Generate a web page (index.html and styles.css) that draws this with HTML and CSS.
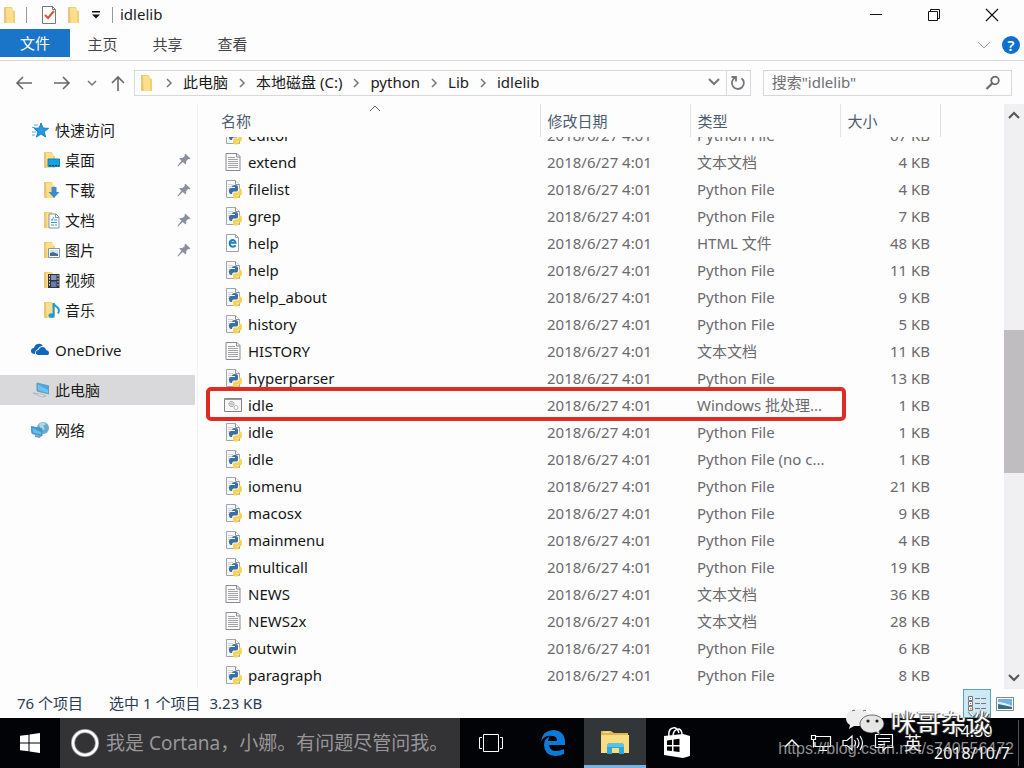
FILE: index.html
```html
<!DOCTYPE html>
<html lang="zh-CN">
<head>
<meta charset="utf-8">
<title>idlelib</title>
<link rel="stylesheet" href="styles.css">
</head>
<body>
<svg class="defs" aria-hidden="true">
  <symbol id="folder" viewBox="0 0 16 18"><path d="M2 1h8v3l3 1v12H2z" fill="#f3cf70"/><path d="M4 2h7v15H5z" fill="#fbdf8d"/><path d="M2 1l2 1v15l-2-1z" fill="#e9c67a"/></symbol>
  <symbol id="txt" viewBox="0 0 18 20"><path d="M2 1.500h11l3 3V18.500H2z" fill="#fbfbfb" stroke="#8b898c"/><path d="M12.500 1.500v3.500H16" fill="none" stroke="#8b898c"/><path d="M4 5.500h7M4 7.500h10M4 9.500h10M4 11.500h10M4 13.500h10M4 15.500h10" stroke="#a3a1a4"/></symbol>
  <symbol id="py" viewBox="0 0 18 20"><path d="M2.500 1.500h9l4 4V18.500h-13z" fill="#f6f7fa" stroke="#a2a5ab"/><path d="M11.500 1.500v4h4" fill="#fff" stroke="#8d9199"/><path d="M4 5.500h5M4 7.500h4M4 9.500h2M4 11.500h2" stroke="#ccd2dc"/><path d="M8 8q0-2 3-2t3 2v3q0 1.500-2 1.500H9.500Q8 12.500 8 15H7q-2 0-2-3t2-3h4V8z" fill="#3870a3"/><path d="M15 9.500h1q2 0 2 3.500t-2 3.500h-3.500v.5h2.500q0 2.500-3 2.500t-3-2v-2.500q0-1.500 1.500-1.500h2.500q2 0 2-2z" fill="#f8d353"/></symbol>
  <symbol id="html" viewBox="0 0 18 20"><path d="M2.500 1.500h9l3 3v14h-12z" fill="#fcfdff" stroke="#9ba3ad"/><path d="M11.500 1.500v3h3" fill="none" stroke="#9ba3ad"/><path d="M11.800 12.600Q8 15 6 12.200 5 8.500 7.500 7.200 10.500 6 11.500 9.700H6" fill="none" stroke="#1b80c8" stroke-width="2"/></symbol>
  <symbol id="bat" viewBox="0 0 18 20"><path d="M.5 3.500h17v13H.5z" fill="#f8f8f8" stroke="#858585"/><path d="M.5 4.500h17" stroke="#999"/><circle cx="7.500" cy="9" r="2.500" fill="none" stroke="#777" stroke-dasharray="1.300 .6"/><circle cx="7.500" cy="9" r="1" fill="none" stroke="#888" stroke-width=".6"/><circle cx="12" cy="12.500" r="2" fill="none" stroke="#888" stroke-dasharray="1 .6"/></symbol>
  <symbol id="pin" viewBox="0 0 14 14"><path d="M8.500.8l5 4.600-1.200.8-1.200-.2-2 2.300q.6 2-.5 3.300L5.800 9 1 13.500.3 13 4.500 7.800 2 5.600q1.500-1 3.400-.5l2.400-2-.3-1.300z" fill="#8a919b"/></symbol>
  <symbol id="chev" viewBox="0 0 8 10"><path d="M2 1l4 4-4 4" fill="none" stroke="#77757a" stroke-width="1.500"/></symbol>
  <symbol id="down" viewBox="0 0 14 10"><path d="M2 2l5 5 5-5" fill="none" stroke="currentColor" stroke-width="2"/></symbol>
  <symbol id="up" viewBox="0 0 14 10"><path d="M2 8l5-5 5 5" fill="none" stroke="currentColor" stroke-width="2"/></symbol>
</svg>
<div class="desktop">
  <header class="titlebar">
    <svg class="ico" viewBox="0 0 16 18"><use href="#folder"/></svg>
    <i class="rule"></i>
    <button class="quick check" aria-label="属性"><svg width="16" height="18" viewBox="0 0 16 18"><path d="M1.500.5h10l3 3v14h-13z" fill="#fff" stroke="#777"/><path d="M11.500.5v3h3" fill="none" stroke="#777"/><path d="M4 9l3 3 6-7" fill="none" stroke="#d5532f" stroke-width="2"/></svg></button>
    <button class="quick" aria-label="新建文件夹"><svg width="16" height="18"><use href="#folder"/></svg></button>
    <button class="quick more" aria-label="自定义"><svg width="8" height="8" viewBox="0 0 8 8"><path d="M0 0h8v1.500H0zM0 3.500h8L4 7.500z" fill="#111"/></svg></button>
    <i class="rule last"></i>
    <h1>idlelib</h1>
    <div class="window-buttons">
      <button aria-label="最小化"><svg width="14" height="14" viewBox="0 0 14 14"><path d="M1 6.500h12" stroke="#111"/></svg></button>
      <button aria-label="还原"><svg width="14" height="14" viewBox="0 0 14 14"><path d="M1.500 3.500h9v9h-9zM3.500 3V1.500h9v9H11" fill="none" stroke="#111"/></svg></button>
      <button aria-label="关闭"><svg width="14" height="14" viewBox="0 0 14 14"><path d="M1 1l12 12M13 1L1 13" stroke="#111" stroke-width="1.200"/></svg></button>
    </div>
  </header>
  <nav class="ribbon">
    <button class="file-tab">文件</button><button>主页</button><button>共享</button><button>查看</button>
    <div class="ribbon-end">
      <button class="expand" aria-label="展开功能区"><svg width="14" height="10" viewBox="0 0 14 10"><path d="M1 2l6 6 6-6" fill="none" stroke="#9a9a9a"/></svg></button>
      <button class="help" aria-label="帮助">?</button>
    </div>
  </nav>
  <div class="address-row">
    <button class="nav" aria-label="后退"><svg width="18" height="16" viewBox="0 0 18 16"><path d="M17 8H2M8 2L2 8l6 6" fill="none" stroke="#69676b" stroke-width="1.600"/></svg></button>
    <button class="nav forward" aria-label="前进"><svg width="18" height="16" viewBox="0 0 18 16"><path d="M1 8h15M10 2l6 6-6 6" fill="none" stroke="#69676b" stroke-width="1.600"/></svg></button>
    <button class="nav recent" aria-label="最近"><svg width="10" height="8" viewBox="0 0 10 8"><path d="M1 2l4 4 4-4" fill="none" stroke="#77757a" stroke-width="1.500"/></svg></button>
    <button class="nav upward" aria-label="上移"><svg width="14" height="16" viewBox="0 0 14 16"><path d="M7 16V2M1 8l6-6 6 6" fill="none" stroke="#69676b" stroke-width="1.600"/></svg></button>
    <div class="address">
      <svg class="addr-ico" viewBox="0 0 16 18"><use href="#folder"/></svg>
      <svg class="sep"><use href="#chev"/></svg><button>此电脑</button>
      <svg class="sep"><use href="#chev"/></svg><button>本地磁盘 (C:)</button>
      <svg class="sep"><use href="#chev"/></svg><button>python</button>
      <svg class="sep"><use href="#chev"/></svg><button>Lib</button>
      <svg class="sep"><use href="#chev"/></svg><button>idlelib</button>
      <button class="history" aria-label="历史"><svg width="14" height="10"><use href="#down"/></svg></button>
      <button class="refresh" aria-label="刷新"><svg width="16" height="16" viewBox="0 0 16 16"><path d="M11.500 3.200A6 6 0 1 1 5 2.700M1.500 2H6v4.500" fill="none" stroke="#77757a" stroke-width="1.800"/></svg></button>
    </div>
    <label class="search"><input type="text" placeholder='搜索"idlelib"' aria-label="搜索"><svg width="16" height="16" viewBox="0 0 16 16"><circle cx="10" cy="5.500" r="3.800" fill="none" stroke="#69676b" stroke-width="1.800"/><path d="M7.300 8.300L1.500 14" stroke="#69676b" stroke-width="2.200"/></svg></label>
  </div>
  <main class="content">
    <nav class="sidebar">
      <a class="root" href="#"><svg viewBox="0 0 18 18"><path d="M10 2l2 5 5.500.4-4.300 3.400 1.400 5.200L10 13l-4.600 3L7 10.800 3 7.400 8.200 7z" fill="#2899df" stroke="#187fc4"/><path d="M3 4h4M1 6.500h3M1 11h4M1 14h3" stroke="#55b0e7"/></svg>快速访问</a>
      <a class="child" href="#"><svg viewBox="0 0 18 18"><use href="#folder" width="16" height="18"/><path d="M6 8h11.500v7.500H6z" fill="#16a0e6" stroke="#1681ba"/><path d="M7 14.500h10" stroke="#064c7b" stroke-dasharray="2 1"/></svg>桌面<svg class="pin"><use href="#pin"/></svg></a>
      <a class="child" href="#"><svg viewBox="0 0 18 18"><use href="#folder" width="16" height="18"/><path d="M9.500 6h5v5h3L12 17l-5.500-6h3z" fill="#3a8ed0"/></svg>下载<svg class="pin"><use href="#pin"/></svg></a>
      <a class="child" href="#"><svg viewBox="0 0 18 18"><use href="#folder" width="16" height="18"/><path d="M7 3h7l3 3v11H7z" fill="#fafcff" stroke="#8695a3"/><path d="M13.500 3v3.500H17" fill="none" stroke="#8695a3"/><path d="M9 9h2m1 0h3M9 11.500h6M9 14h3m1 0h2M12 6l-2 3" stroke="#2e98c8"/></svg>文档<svg class="pin"><use href="#pin"/></svg></a>
      <a class="child" href="#"><svg viewBox="0 0 18 18"><use href="#folder" width="16" height="18"/><path d="M6.500 7.500h11v9h-11z" fill="#fff" stroke="#8b959e"/><path d="M8 9h8v6H8z" fill="#cce5f5"/><path d="M8 12l3-1 5 2v2H8z" fill="#456f9b"/></svg>图片<svg class="pin"><use href="#pin"/></svg></a>
      <a class="child" href="#"><svg viewBox="0 0 18 18"><use href="#folder" width="16" height="18"/><path d="M6 3h11.500v14H6z" fill="#35343b"/><path d="M9 4h5.500v5H9z" fill="#8496bb"/><path d="M9 10.500h5.500V16H9z" fill="#607db8"/><path d="M7.500 4v12M16 4v12" stroke="#ddd" stroke-dasharray="1.500 1.500"/></svg>视频</a>
      <a class="child" href="#"><svg viewBox="0 0 18 18"><use href="#folder" width="16" height="18"/><path d="M11.500 2v12M11.500 2q1 3 4 4.500 2.500 2 .5 6" fill="none" stroke="#1e9ad7" stroke-width="2"/><ellipse cx="9.500" cy="14.500" rx="3" ry="2.300" fill="#1e9ad7"/></svg>音乐</a>
      <a class="root spaced" href="#"><svg viewBox="0 0 18 18"><path d="M4 13Q0 13 0 10t3-3q1-4 4-4 3-1 5 2-4 0-5 3-3 1-3 5z" fill="#1765b5"/><path d="M7 14q-3-1-2-3 0-2 2.500-2Q9 5.500 11.500 6q3 0 3.500 3 3 .5 3 3t-2 2z" fill="#0e68bd"/></svg>OneDrive</a>
      <a class="root spaced selected" href="#"><svg viewBox="0 0 18 18"><path d="M6 2l12 3v8L6 10z" fill="#42a9e8" stroke="#7398af"/><path d="M7 3.500L17 9v3L7 9z" fill="#6bc2f3"/><path d="M2 12l8 1 5 2-4 1z" fill="#dce2e7" stroke="#9aa5ad" stroke-width=".6"/></svg>此电脑</a>
      <a class="root spaced" href="#"><svg viewBox="0 0 18 18"><circle cx="12" cy="7" r="6" fill="#68abcf"/><path d="M8 3q4-3 7 0l-3 2 2 3-4 2z" fill="#b0d9dd"/><path d="M0 5.500l11 2V15L1 12.500z" fill="#329adc" stroke="#5c91b4"/><path d="M1.500 7l8.500 4v2.500l-8-2z" fill="#66bdf0"/><path d="M4 14l6 1-1 2-5-1z" fill="#719fbd"/></svg>网络</a>
    </nav>
    <section class="files">
      <table class="head">
        <colgroup><col class="c-name"><col class="c-date"><col class="c-type"><col class="c-size"><col></colgroup>
        <tr><th>名称<svg class="sort" viewBox="0 0 12 7"><path d="M1 6l5-5 5 5" fill="none" stroke="#666"/></svg></th><th>修改日期</th><th>类型</th><th>大小</th><th></th></tr>
      </table>
      <div class="viewport">
      <table class="body">
        <colgroup><col class="c-name"><col class="c-date"><col class="c-type"><col class="c-size"><col></colgroup>
        <tr><td><svg><use href="#py"/></svg>editor</td><td>2018/6/27 4:01</td><td>Python File</td><td>67 KB</td><td></td></tr>
        <tr><td><svg><use href="#txt"/></svg>extend</td><td>2018/6/27 4:01</td><td>文本文档</td><td>4 KB</td><td></td></tr>
        <tr><td><svg><use href="#py"/></svg>filelist</td><td>2018/6/27 4:01</td><td>Python File</td><td>4 KB</td><td></td></tr>
        <tr><td><svg><use href="#py"/></svg>grep</td><td>2018/6/27 4:01</td><td>Python File</td><td>7 KB</td><td></td></tr>
        <tr><td><svg><use href="#html"/></svg>help</td><td>2018/6/27 4:01</td><td>HTML 文件</td><td>48 KB</td><td></td></tr>
        <tr><td><svg><use href="#py"/></svg>help</td><td>2018/6/27 4:01</td><td>Python File</td><td>11 KB</td><td></td></tr>
        <tr><td><svg><use href="#py"/></svg>help_about</td><td>2018/6/27 4:01</td><td>Python File</td><td>9 KB</td><td></td></tr>
        <tr><td><svg><use href="#py"/></svg>history</td><td>2018/6/27 4:01</td><td>Python File</td><td>5 KB</td><td></td></tr>
        <tr><td><svg><use href="#txt"/></svg>HISTORY</td><td>2018/6/27 4:01</td><td>文本文档</td><td>11 KB</td><td></td></tr>
        <tr><td><svg><use href="#py"/></svg>hyperparser</td><td>2018/6/27 4:01</td><td>Python File</td><td>13 KB</td><td></td></tr>
        <tr><td><svg><use href="#bat"/></svg>idle<span class="marker"></span></td><td>2018/6/27 4:01</td><td>Windows 批处理...</td><td>1 KB</td><td></td></tr>
        <tr><td><svg><use href="#py"/></svg>idle</td><td>2018/6/27 4:01</td><td>Python File</td><td>1 KB</td><td></td></tr>
        <tr><td><svg><use href="#py"/></svg>idle</td><td>2018/6/27 4:01</td><td>Python File (no c...</td><td>1 KB</td><td></td></tr>
        <tr><td><svg><use href="#py"/></svg>iomenu</td><td>2018/6/27 4:01</td><td>Python File</td><td>21 KB</td><td></td></tr>
        <tr><td><svg><use href="#py"/></svg>macosx</td><td>2018/6/27 4:01</td><td>Python File</td><td>9 KB</td><td></td></tr>
        <tr><td><svg><use href="#py"/></svg>mainmenu</td><td>2018/6/27 4:01</td><td>Python File</td><td>4 KB</td><td></td></tr>
        <tr><td><svg><use href="#py"/></svg>multicall</td><td>2018/6/27 4:01</td><td>Python File</td><td>19 KB</td><td></td></tr>
        <tr><td><svg><use href="#txt"/></svg>NEWS</td><td>2018/6/27 4:01</td><td>文本文档</td><td>36 KB</td><td></td></tr>
        <tr><td><svg><use href="#txt"/></svg>NEWS2x</td><td>2018/6/27 4:01</td><td>文本文档</td><td>28 KB</td><td></td></tr>
        <tr><td><svg><use href="#py"/></svg>outwin</td><td>2018/6/27 4:01</td><td>Python File</td><td>6 KB</td><td></td></tr>
        <tr><td><svg><use href="#py"/></svg>paragraph</td><td>2018/6/27 4:01</td><td>Python File</td><td>8 KB</td><td></td></tr>
      </table>
      </div>
    </section>
    <div class="scrollbar">
      <button aria-label="向上滚动"><svg width="14" height="10"><use href="#up"/></svg></button>
      <div class="track"><i class="before"></i><i class="thumb"></i><i class="after"></i></div>
      <button aria-label="向下滚动"><svg width="14" height="10"><use href="#down"/></svg></button>
    </div>
  </main>
  <footer class="status">
    <span>76 个项目</span><span class="picked">选中 1 个项目</span><span>3.23 KB</span>
    <div class="views">
      <button class="on" aria-label="详细信息"><svg width="20" height="18" viewBox="0 0 20 18"><path d="M1.500 1.500h4v4h-4zM1.500 6.500h4v4h-4zM1.500 11.500h4v4h-4z" fill="#fff" stroke="#777"/><path d="M3 3h1v1H3z M3 8h1v1H3z" fill="#3b77a8"/><path d="M3 13h1.500v1.500H3z" fill="#d80"/><path d="M8 3.500h5m1 0h5M8 8.500h5m1 0h5M8 13.500h5m1 0h5" stroke="#777"/></svg></button>
      <button aria-label="大图标"><svg width="18" height="14" viewBox="0 0 18 14"><path d="M.5.500h17v13H.5z" fill="#fff" stroke="#7f8992"/><path d="M2 2h14v10H2z" fill="#71b3e4"/><path d="M2 5q6 0 14 4v3H2z" fill="#e2f0f4"/><path d="M2 7l5 1 9 2v2H2z" fill="#376b80"/></svg></button>
    </div>
  </footer>
  <footer class="taskbar">
    <button class="start" aria-label="开始"><svg width="20" height="20" viewBox="0 0 20 20"><path d="M0 2.800L8.500 1.700V9.500H0zM9.500 1.500L20 0v9.500H9.500zM0 10.500h8.500v7.800L0 17.200zM9.500 10.500H20V20L9.500 18.500z" fill="#fff"/></svg></button>
    <label class="cortana"><svg width="28" height="28" viewBox="0 0 28 28"><circle cx="14" cy="14" r="12" fill="none" stroke="#999" stroke-width="4"/><circle cx="14" cy="14" r="12" fill="none" stroke="#fff" stroke-width="2.500"/></svg><input type="text" placeholder="我是 Cortana，小娜。有问题尽管问我。" aria-label="Cortana"></label>
    <button class="app" aria-label="任务视图"><svg width="26" height="20" viewBox="0 0 26 20"><path d="M5.500 1.500h15v17h-15zM4 4.500H1.500v11H4M22 4.500h2.500v11H22" fill="none" stroke="#fff"/></svg></button>
    <button class="app" aria-label="Edge"><svg width="26" height="28" viewBox="0 0 26 28"><path d="M1 12Q3 1 14 1q11 1 11 13v2H9q1 6 7 6 4 0 8-2v5q-4 2-9 2-11-1-11-11 0-6 6-9-2 2-2 5h9q0-5-5-5Q5 6 1 12z" fill="#0c7bd7"/></svg></button>
    <button class="app active" aria-label="文件资源管理器"><svg width="28" height="24" viewBox="0 0 28 24"><path d="M0 1h10l3 2h14v20H0z" fill="#e2b64d"/><path d="M0 5h28v18H0z" fill="#fadd83"/><path d="M2 2h7" stroke="#fff1bd"/><path d="M6 23V15l2-2h13l2 2v9h-5v-6h-7v6H6z" fill="#2ba9d8"/><path d="M6 15l2-2h13l2 2v2H6z" fill="#57c3e8"/></svg></button>
    <button class="app" aria-label="应用商店"><svg width="28" height="32" viewBox="0 0 28 32"><path d="M6 9q-1-7 4-8 4-1 6 5M10 8q1-6 6-6 3 1 3 6" fill="none" stroke="#fff" stroke-width="1.500"/><path d="M1 9l19-2 7 2v20l-7 2L1 28z" fill="#fff"/><path d="M4 13.500l5-.7V18H4zM10.500 12.500l6-.8V18h-6zM4 19.500h5V24l-5-.6zM10.500 19.500h6V25l-6-.7z" fill="#000"/></svg></button>
    <div class="tray">
      <button aria-label="显示隐藏图标"><svg width="16" height="10" viewBox="0 0 16 10"><path d="M1 9l7-7 7 7" fill="none" stroke="#fff" stroke-width="1.500"/></svg></button>
      <button aria-label="网络"><svg width="22" height="18" viewBox="0 0 22 18"><path d="M6 2.500h14.500v10H5V8M9 16.500h8M13 12.500v4M1.500 1.500h4v4h-4zM3.500 5.500v8" fill="none" stroke="#fff" stroke-width="1.200"/></svg></button>
      <button aria-label="音量"><svg width="22" height="18" viewBox="0 0 22 18"><path d="M1 6.500h4l5-4.500v14l-5-4.500H1zM12.500 6q2 3 0 6M15 4q4 5 0 10M18 2q5 7 0 14" fill="none" stroke="#fff" stroke-width="1.200"/></svg></button>
      <button aria-label="操作中心"><svg width="20" height="20" viewBox="0 0 20 20"><path d="M1.500 1.500h17v13H12L9 18v-3.500H1.500zM4 5.500h12M4 8.500h12M4 11.500h7" fill="none" stroke="#fff" stroke-width="1.200"/></svg></button>
      <button class="ime">英</button>
      <div class="clock"><time>14:50</time><time>2018/10/7</time></div>
    </div>
    <div class="brand"><svg width="40" height="28" viewBox="0 0 40 28"><path d="M13 1C6 1 1 5 1 10q0 5 4 7l-1 4 5-3h7q-1-9 9-11-4-6-12-6z" fill="#eee"/><path d="M7 3l2-1 1 1M18 3l2-1 1 1" fill="none" stroke="#777"/><path d="M27 7c-7 0-12 4-12 9s5 9 12 9l4-1 4 3-1-4q5-3 5-7c0-5-5-9-12-9z" fill="#e6e6e6" stroke="#333" stroke-width=".7"/><circle cx="23" cy="13" r="1.600" fill="#222"/><circle cx="32" cy="13" r="1.600" fill="#222"/></svg><span>咪哥杂谈</span></div>
    <div class="source">https://blog.csdn.net/s740556472</div>
  </footer>
</div>
</body>
</html>
```
FILE: styles.css
```css
* { box-sizing: border-box; }
body { margin: 0; background: #fdfdfe; color: #1b1b1b; font: 15px/20px "Noto Sans", "Noto Sans CJK SC", sans-serif; }
button, input { font: inherit; color: inherit; border: 0; padding: 0; background: none; }
button { display: flex; align-items: center; justify-content: center; white-space: nowrap; }
a { color: inherit; text-decoration: none; }
svg { display: block; flex: none; }
.defs { position: absolute; width: 0; height: 0; }
.desktop { display: flex; flex-direction: column; height: 100vh; overflow: hidden; }

.titlebar { display: flex; align-items: center; height: 29px; padding-left: 2px; }
.titlebar .ico { width: 16px; height: 18px; }
.titlebar h1 { margin: 0 0 0 7px; padding-bottom: 2px; font-size: 15px; font-weight: 400; }
.rule { width: 1px; height: 16px; margin-left: 8px; background: #999; }
.rule.last { margin-left: 12px; }
.quick { margin-left: 9px; }
.quick.check { margin-left: 14px; }
.quick.more { margin-left: 10px; }
.window-buttons { display: flex; margin-left: auto; padding-right: 3px; }
.window-buttons button { width: 58px; height: 28px; }

.ribbon { display: flex; flex: none; height: 32px; border-bottom: 1px solid #d9d8db; color: #454347; }
.ribbon button { height: 29px; width: 65px; }
.ribbon .file-tab { width: 70px; height: 28px; background: #1a74c8; color: #fff; }
.ribbon-end { display: flex; align-items: center; gap: 11px; margin-left: auto; padding-right: 4px; }
.ribbon .expand { width: 14px; }
.ribbon .help { width: 18px; height: 18px; border-radius: 50%; background: #0c70cc; color: #fff; font-weight: 600; }

.address-row { display: flex; align-items: center; flex: none; height: 43px; padding: 0 12px 0 15px; }
.nav { width: 18px; margin-right: 20px; }
.nav.forward { margin-right: 16px; }
.nav.recent { width: 10px; margin-right: 14px; }
.nav.upward { width: 14px; margin-right: 9px; }
.address { display: flex; align-items: center; flex: 1; height: 26px; border: 1px solid #d9d6dc; padding-left: 4px; }
.address button { padding-bottom: 2px; }
.addr-ico { width: 16px; height: 18px; }
.sep { width: 8px; height: 10px; margin: 0 10px; }
.history { width: 24px; margin-left: auto; color: #77757a; }
.address .refresh { width: 24px; height: 24px; padding: 0; border-left: 1px solid #d9d6dc; }
.search { display: flex; align-items: center; flex: none; width: 25%; height: 26px; margin-left: 12px; padding: 0 10px 0 8px; border: 1px solid #d9d6dc; }
.search input { flex: 1; min-width: 0; padding-bottom: 2px; }
input::placeholder { color: #6f6d72; opacity: 1; }

.content { display: flex; flex: 1; min-height: 0; }
.sidebar { flex: none; width: 198px; padding: 11px 2px 0 0; border-right: 1px solid #f2f1f4; }
.sidebar a { display: flex; align-items: center; height: 30px; padding-left: 31px; gap: 6px; }
.sidebar a > svg { width: 18px; height: 18px; }
.sidebar .child { padding-left: 42px; gap: 5px; padding-right: 4px; }
.sidebar a > .pin { width: 14px; height: 14px; margin-left: auto; }
.sidebar .spaced { margin-top: 10px; }
.sidebar .selected { background: #d9d8da; }

.files { display: flex; flex-direction: column; flex: 1; min-width: 0; }
table { width: 100%; table-layout: fixed; border-collapse: collapse; }
.c-name { width: 342px; }
.c-date, .c-type { width: 150px; }
.c-size { width: 100px; }
th { position: relative; height: 33px; padding: 0 7px; border-right: 1px solid #e3e2e5; text-align: left; font-weight: 400; color: #4d5b6e; }
th:first-child { padding-left: 23px; }
th:last-child { border: 0; }
.sort { position: absolute; left: 50%; top: 1px; width: 12px; height: 7px; }
.viewport { display: flex; align-items: flex-end; flex: 1; min-height: 0; overflow: hidden; }
td { height: 27px; padding: 0 7px 2px; color: #6b696d; white-space: nowrap; }
td:first-child { position: relative; padding-left: 50px; color: #151515; }
td:nth-child(4) { padding-right: 10px; text-align: right; }
td svg { float: left; width: 18px; height: 20px; margin-left: -24px; }
.marker { position: absolute; z-index: 1; left: 8px; top: -5px; width: 640px; height: 34px; border: 4px solid #e02b22; border-radius: 5px; }

.scrollbar { display: flex; flex-direction: column; flex: none; width: 20px; background: #f0eff1; color: #555; }
.scrollbar button { height: 22px; }
.track { display: flex; flex-direction: column; flex: 1; }
.before { flex: 204; }
.thumb { flex: 143; background: #bfbdc0; }
.after { flex: 194; }

.status { display: flex; align-items: center; flex: none; height: 29px; padding-left: 17px; color: #2c3a52; }
.status span { padding-bottom: 2px; }
.picked { margin: 0 9px 0 26px; }
.views { display: flex; align-self: stretch; margin-left: auto; padding-right: 5px; }
.views button { width: 28px; height: 29px; }
.views .on { border: 1px solid #56a8b8; background: #cfe8f5; }

.taskbar { position: relative; display: flex; flex: none; height: 50px; background: #020306; color: #fff; }
.start { width: 60px; }
.cortana { display: flex; align-items: center; flex: 0 1 400px; padding-left: 11px; gap: 7px; background: #333234; }
.cortana input { flex: 1; min-width: 0; font-size: 19px; line-height: 28px; }
.cortana input::placeholder { color: #98969a; }
.app { width: 62px; }
.app.active { background: #333638; border-bottom: 3px solid #76b4e6; }
.tray { display: flex; align-items: center; gap: 10px; margin-left: auto; padding-right: 5px; }
.ime { font-size: 18px; }
.clock { display: flex; flex-direction: column; align-items: center; width: 87px; padding: 0 6px 2px 0; border-right: 1px solid #555; font-size: 16px; line-height: 22px; }
.brand { position: absolute; right: 33px; top: -12px; display: flex; align-items: center; gap: 6px; font-size: 25px; line-height: 32px; text-shadow: 1px 1px 1px #333, -1px 0 1px #555; }
.source { position: absolute; right: 10px; top: 20px; font: 16px/22px "Liberation Sans", Arial, sans-serif; color: rgba(205, 205, 205, .7); }
```
